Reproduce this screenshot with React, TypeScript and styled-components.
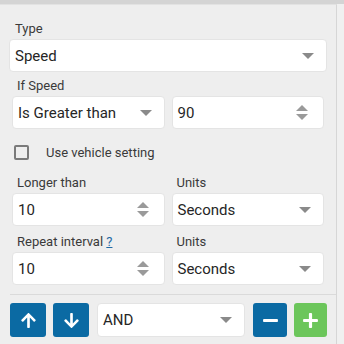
import React from 'react';
import styled, {createGlobalStyle} from "styled-components";
import {FaArrowUp, FaArrowDown, FaMinus, FaPlus} from "react-icons/fa";

const GlobalStyle = createGlobalStyle`
    html, body {
        margin: 0;
        padding: 0;
        background: #f0f0f0;
        font-family: Roboto, "Liberation Sans", sans-serif;
    }
`

function Select({value, width}: {value: string; width?: string}) {
    return (
        <Field $width={width}>
            <FieldText>{value}</FieldText>
            <Caret/>
        </Field>
    );
}

function NumberInput({value}: {value: string}) {
    return (
        <Field>
            <FieldText>{value}</FieldText>
            <Spinner>
                <SpinUp/>
                <SpinDown/>
            </Spinner>
        </Field>
    );
}

function App() {
    return (
        <Page>
            <GlobalStyle/>
            <TopBar/>
            <Panel>
                <Label>Type</Label>
                <Select value="Speed"/>
                <Group>
                    <Label $pad={5}>If Speed</Label>
                    <Row>
                        <Select value="Is Greater than"/>
                        <NumberInput value="90"/>
                    </Row>
                    <CheckRow>
                        <Checkbox/>
                        <CheckLabel>Use vehicle setting</CheckLabel>
                    </CheckRow>
                    <Row>
                        <Column>
                            <Label $pad={5}>Longer than</Label>
                            <NumberInput value="10"/>
                        </Column>
                        <Column>
                            <Label $pad={5}>Units</Label>
                            <Select value="Seconds"/>
                        </Column>
                    </Row>
                    <Row $top={8}>
                        <Column>
                            <Label $pad={5}>Repeat interval <Help>?</Help></Label>
                            <NumberInput value="10"/>
                        </Column>
                        <Column>
                            <Label $pad={5}>Units</Label>
                            <Select value="Seconds"/>
                        </Column>
                    </Row>
                </Group>
                <Separator/>
                <Toolbar>
                    <IconButton $color="#0b6aa3" $width={36}><FaArrowUp size={17}/></IconButton>
                    <IconButton $color="#0b6aa3" $width={36}><FaArrowDown size={17}/></IconButton>
                    <Select value="AND" width="148px"/>
                    <IconButton $color="#0b6aa3" $width={34}><FaMinus size={17}/></IconButton>
                    <IconButton $color="#6cc65b" $width={33}><FaPlus size={17}/></IconButton>
                </Toolbar>
            </Panel>
        </Page>
    );
}

const Page = styled.div`
    width: 344px;
    height: 344px;
    overflow: hidden;
    background: #f0f0f0;
`
const TopBar = styled.div`
    height: 4px;
    background: #d4d4d4;
`
const Panel = styled.div`
    width: 337px;
    height: 340px;
    box-sizing: border-box;
    background: #eeeeee;
    border-right: 1px solid #d6d6d6;
    border-top: 1px solid #e2e2e2;
    padding: 16px 9px 0 9px;
`
const Label = styled.div<{$pad?: number}>`
    font-size: 13px;
    line-height: 16px;
    color: #3a3a3a;
    padding-left: ${p => p.$pad ?? 6}px;
    margin-bottom: 2px;
`
const Help = styled.span`
    color: #1f6aa6;
    text-decoration: underline;
`
const Field = styled.div<{$width?: string}>`
    box-sizing: border-box;
    flex: ${p => p.$width ? `0 0 ${p.$width}` : '1 1 0'};
    height: 33px;
    background: #fff;
    border: 1px solid #e4e4e4;
    border-radius: 4px;
    display: flex;
    align-items: center;
    justify-content: space-between;
    padding: 0 12px 0 5px;
`
const FieldText = styled.span`
    font-size: 15px;
    color: #262626;
`
const Caret = styled.span`
    width: 0;
    height: 0;
    border-left: 6px solid transparent;
    border-right: 6px solid transparent;
    border-top: 6px solid #8a8a8a;
`
const Spinner = styled.span`
    display: flex;
    flex-direction: column;
    gap: 3px;
    margin-right: 3px;
`
const SpinUp = styled.span`
    width: 0;
    height: 0;
    border-left: 6px solid transparent;
    border-right: 6px solid transparent;
    border-bottom: 6px solid #9a9a9a;
`
const SpinDown = styled(SpinUp)`
    border-bottom: none;
    border-top: 6px solid #9a9a9a;
`
const Group = styled.div`
    padding: 0 3px;
    margin-top: 6px;
`
const Row = styled.div<{$top?: number}>`
    display: flex;
    gap: 7px;
    margin-top: ${p => p.$top ?? 0}px;
`
const Column = styled.div`
    flex: 1 1 0;
    min-width: 0;
`
const CheckRow = styled.div`
    display: flex;
    align-items: center;
    height: 46px;
    padding-left: 2px;
    margin-top: 0;
`
const Checkbox = styled.span`
    box-sizing: border-box;
    width: 15px;
    height: 15px;
    border: 2px solid #7a7a7a;
    border-radius: 2px;
`
const CheckLabel = styled.span`
    font-size: 13px;
    color: #3a3a3a;
    margin-left: 17px;
`
const Separator = styled.div`
    height: 1px;
    background: #dadada;
    margin: 9px -9px 8px 1px;
`
const Toolbar = styled.div`
    display: flex;
    align-items: center;
    gap: 7px;
    padding-left: 1px;
    & > div {
        height: 34px;
        margin: 0 1px;
    }
`
const IconButton = styled.button<{$color: string; $width: number}>`
    width: ${p => p.$width}px;
    height: 34px;
    flex: 0 0 auto;
    border: none;
    border-radius: 3px;
    background: ${p => p.$color};
    color: #fff;
    display: flex;
    align-items: center;
    justify-content: center;
    padding: 0;
`

export default App;
